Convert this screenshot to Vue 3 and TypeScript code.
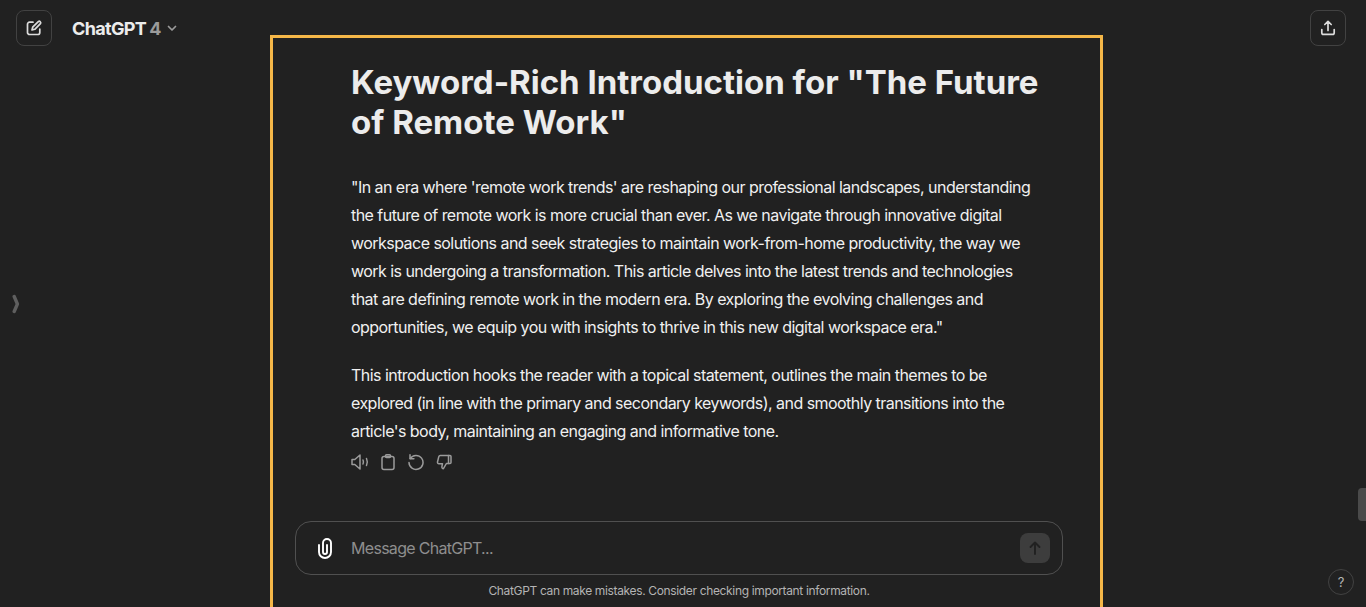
<template>
  <div class="page">
    <aside class="side left">
      <div class="top-left">
        <button class="icon-btn" aria-label="New chat">
          <svg width="18" height="18" viewBox="0 0 18 18" fill="none" stroke="currentColor" stroke-width="1.7" stroke-linecap="round" stroke-linejoin="round">
            <path d="M8 3.2H4.6A2.1 2.1 0 0 0 2.5 5.3v8.1a2.1 2.1 0 0 0 2.1 2.1h8.1a2.1 2.1 0 0 0 2.1-2.1V10" />
            <path d="M13.3 2.6a1.5 1.5 0 0 1 2.1 2.1l-5.6 5.6-2.8.7.7-2.8z" />
          </svg>
        </button>
        <div class="model">
          <span>ChatGPT</span><span class="ver">4</span>
          <svg width="12" height="12" viewBox="0 0 12 12" fill="none" stroke="#9b9b9b" stroke-width="1.7" stroke-linecap="round" stroke-linejoin="round">
            <path d="M2.5 4.5 6 8l3.5-3.5" />
          </svg>
        </div>
      </div>
      <svg class="handle" width="8" height="20" viewBox="0 0 8 20" fill="none" stroke="#5f5f5f" stroke-width="3.4" stroke-linecap="round" stroke-linejoin="round">
        <path d="M2.2 2.5 5.4 10l-3.2 7.5" />
      </svg>
    </aside>

    <main class="frame">
      <article class="answer">
        <h1>Keyword-Rich Introduction for "The Future of Remote Work"</h1>
        <p v-for="para in paragraphs" :key="para">{{ para }}</p>
        <div class="actions">
          <svg width="18" height="18" viewBox="0 0 18 18" fill="none" stroke="currentColor" stroke-width="1.5" stroke-linecap="round" stroke-linejoin="round">
            <path d="M1 6.500v5h2.800L9 16V2L3.800 6.500z" />
            <path d="M12 7c.6 1.300.6 2.700 0 4M15.500 5.500c1 2.200 1 4.800 0 7" />
          </svg>
          <svg width="18" height="18" viewBox="0 0 18 18" fill="none" stroke="currentColor" stroke-width="1.5" stroke-linecap="round" stroke-linejoin="round">
            <rect x="3" y="3.500" width="12" height="13" rx="2" />
            <path d="M6.500 3.500V2.800c0-.6.4-1 1-1h3c.6 0 1 .4 1 1v.7c0 .6-.4 1-1 1h-3c-.6 0-1-.4-1-1z" />
          </svg>
          <svg width="18" height="18" viewBox="0 0 18 18" fill="none" stroke="currentColor" stroke-width="1.5" stroke-linecap="round" stroke-linejoin="round">
            <path d="M3.200 5.500A7 7 0 1 1 2 9.500" />
            <path d="M3 1.800v3.900h3.900" />
          </svg>
          <svg class="down" width="18" height="18" viewBox="0 0 18 18" fill="none" stroke="currentColor" stroke-width="1.5" stroke-linecap="round" stroke-linejoin="round">
            <path d="M12.500 2.500H4.300c-.7 0-1.300.4-1.500 1.100L1.500 9c-.2.900.5 1.700 1.400 1.700h3.600l-.6 3c-.2 1 .5 2 1.500 2l3-5.200h3.600c.6 0 1-.4 1-1V3.500c0-.6-.4-1-1-1h-1z" />
            <path d="M12.500 2.500v8" />
          </svg>
        </div>
      </article>

      <div class="composer-wrap">
        <div class="composer">
          <svg class="clip" width="20" height="22" viewBox="0 0 20 22" fill="none" stroke="#fff" stroke-width="1.9" stroke-linecap="round" stroke-linejoin="round">
            <path d="M4 8v7a6 6 0 0 0 12 0V6a4 4 0 0 0-8 0v9a2 2 0 0 0 4 0V8" />
          </svg>
          <span class="placeholder">Message ChatGPT...</span>
          <button class="send" aria-label="Send">
            <svg width="16" height="16" viewBox="0 0 16 16" fill="none" stroke="#212121" stroke-width="1.9" stroke-linecap="round" stroke-linejoin="round">
              <path d="M8 14V2.500M3.500 7 8 2.500 12.500 7" />
            </svg>
          </button>
        </div>
        <div class="disclaimer">ChatGPT can make mistakes. Consider checking important information.</div>
      </div>
    </main>

    <aside class="side right">
      <button class="icon-btn" aria-label="Share">
        <svg width="18" height="18" viewBox="0 0 18 18" fill="none" stroke="currentColor" stroke-width="1.7" stroke-linecap="round" stroke-linejoin="round">
          <path d="M9 11.500V2.500M5.800 5.500 9 2.300l3.200 3.200" />
          <path d="M2.800 10.500v3.200c0 1 .7 1.700 1.700 1.700h9c1 0 1.700-.7 1.700-1.700v-3.200" />
        </svg>
      </button>
      <div class="thumb"></div>
      <div class="help">?</div>
    </aside>
  </div>
</template>

<script setup lang="ts">
const paragraphs: string[] = [
  `"In an era where 'remote work trends' are reshaping our professional landscapes, understanding the future of remote work is more crucial than ever. As we navigate through innovative digital workspace solutions and seek strategies to maintain work-from-home productivity, the way we work is undergoing a transformation. This article delves into the latest trends and technologies that are defining remote work in the modern era. By exploring the evolving challenges and opportunities, we equip you with insights to thrive in this new digital workspace era."`,
  `This introduction hooks the reader with a topical statement, outlines the main themes to be explored (in line with the primary and secondary keywords), and smoothly transitions into the article's body, maintaining an engaging and informative tone.`,
]
</script>

<style>
html,
body {
  margin: 0;
  background: #212121;
  overflow: hidden;
}
</style>

<style scoped>
.page {
  display: grid;
  grid-template-columns: 270px 833px 1fr;
  height: 607px;
  overflow: hidden;
  background: #212121;
  color: #ececec;
  font-family: "Inter", "Liberation Sans", sans-serif;
}

.side {
  position: relative;
}

.top-left {
  display: flex;
  align-items: center;
  gap: 20px;
  padding: 10px 0 0 16px;
}

.icon-btn {
  display: flex;
  align-items: center;
  justify-content: center;
  width: 36px;
  height: 36px;
  padding: 0;
  background: none;
  border: 1px solid #424242;
  border-radius: 8px;
  color: #dcdcdc;
}

.model {
  display: flex;
  align-items: center;
  font-size: 18px;
  font-weight: 700;
  letter-spacing: -0.65px;
  color: #ececec;
  white-space: nowrap;
}

.ver {
  margin: 0 5px 0 3px;
  color: #9b9b9b;
}

.handle {
  position: absolute;
  left: 12px;
  top: 294px;
}

.frame {
  display: flex;
  flex-direction: column;
  justify-content: space-between;
  box-sizing: border-box;
  height: 572px;
  margin-top: 35px;
  border: 3px solid #f5b748;
  border-bottom: 0;
}

.answer {
  padding: 24px 60px 0 78px;
}

h1 {
  margin: 0 0 31px;
  font-size: 33px;
  line-height: 40px;
  font-weight: 700;
  letter-spacing: 0;
  color: #ececec;
}

p {
  margin: 0 0 20px;
  font-size: 16px;
  line-height: 28px;
  letter-spacing: -0.54px;
  color: #f0f0f0;
}

p:last-of-type {
  margin-bottom: 0;
}

.actions {
  display: flex;
  gap: 10px;
  margin-top: 8px;
  color: #9b9b9b;
}

.down {
  margin-left: 1px;
}

.composer-wrap {
  padding: 0 37px 0 22px;
}

.composer {
  display: flex;
  align-items: center;
  box-sizing: border-box;
  height: 54px;
  padding: 0 12px 0 19px;
  border: 1px solid #505050;
  border-radius: 16px;
}

.clip {
  flex: none;
}

.placeholder {
  flex: 1;
  margin-left: 16px;
  font-size: 16px;
  letter-spacing: -0.7px;
  color: #8e8e8e;
}

.send {
  display: flex;
  align-items: center;
  justify-content: center;
  width: 30px;
  height: 30px;
  padding: 0;
  border: 0;
  border-radius: 8px;
  background: #3d3d3d;
}

.disclaimer {
  padding: 8px 0 8px;
  font-size: 12px;
  line-height: 16px;
  letter-spacing: -0.35px;
  text-align: center;
  color: #b4b4b4;
}

.right {
  display: flex;
  flex-direction: column;
  align-items: flex-end;
  padding: 10px 20px 0 0;
}

.thumb {
  position: absolute;
  right: 0;
  top: 488px;
  width: 8px;
  height: 33px;
  border-radius: 4px 0 0 4px;
  background: #4a4a4a;
}

.help {
  position: absolute;
  right: 12px;
  bottom: 12px;
  box-sizing: border-box;
  width: 26px;
  height: 26px;
  border: 1px solid #424242;
  border-radius: 50%;
  font-size: 13px;
  line-height: 24px;
  text-align: center;
  color: #b4b4b4;
}
</style>
